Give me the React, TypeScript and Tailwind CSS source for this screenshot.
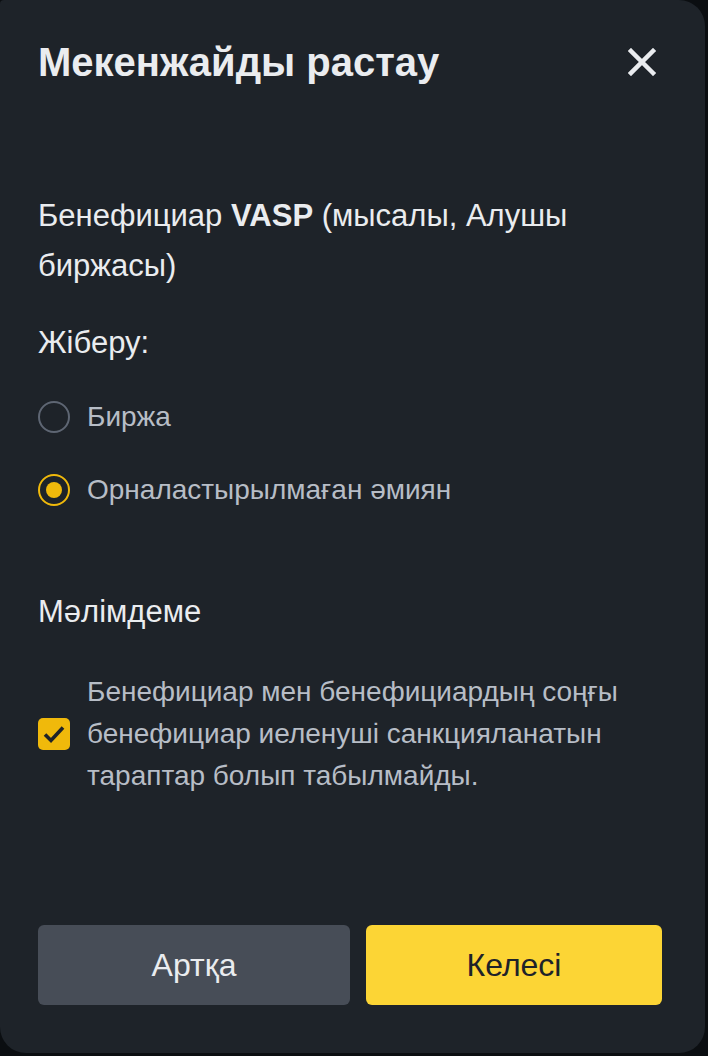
import { useState } from "react"

const FONT = { fontFamily: '"Liberation Sans", Arial, sans-serif' }

function Radio({ checked, label, onClick }: { checked: boolean; label: string; onClick: () => void }) {
  return (
    <button onClick={onClick} className="flex items-center gap-[17px] h-[42px] text-left">
      <span
        className={`w-8 h-8 rounded-full border-2 flex items-center justify-center ${
          checked ? "border-[#f0b90b]" : "border-[#5e6673]"
        }`}
      >
        {checked && <span className="w-4 h-4 rounded-full bg-[#f0b90b]" />}
      </span>
      <span className="text-[28px] leading-[42px] text-[#b7bdc6]">{label}</span>
    </button>
  )
}

export default function App() {
  const [target, setTarget] = useState<"exchange" | "wallet">("wallet")
  const [agree, setAgree] = useState(true)

  return (
    <div className="w-[708px] h-[1056px] bg-[#0b0e11]" style={FONT}>
      <div className="w-[705px] h-[1053px] bg-[#1e2329] rounded-tl-[4px] rounded-tr-[26px] rounded-b-[26px] flex flex-col px-[38px] pt-[38px] pb-[48px]">
        <div className="flex items-center justify-between h-12">
          <h1 className="text-[40px] leading-[48px] font-bold text-[#eaecef]">Мекенжайды растау</h1>
          <button className="w-8 h-8 flex items-center justify-center mr-[9px]">
            <svg width="28" height="28" viewBox="0 0 28 28">
              <path d="M3 3 L25 25 M25 3 L3 25" stroke="#eaecef" strokeWidth="4.5" strokeLinecap="square" />
            </svg>
          </button>
        </div>

        <p className="mt-[105px] text-[31px] leading-[50px] text-[#eaecef] pr-[60px]">
          Бенефициар <b className="font-bold">VASP</b> (мысалы, Алушы биржасы)
        </p>

        <p className="mt-[28px] text-[31px] leading-[48px] text-[#eaecef]">Жіберу:</p>

        <div className="mt-[29px] flex flex-col gap-[31px]">
          <Radio checked={target === "exchange"} label="Биржа" onClick={() => setTarget("exchange")} />
          <Radio checked={target === "wallet"} label="Орналастырылмаған әмиян" onClick={() => setTarget("wallet")} />
        </div>

        <p className="mt-[77px] text-[31px] leading-[48px] text-[#eaecef]">Мәлімдеме</p>

        <div className="mt-[35px] flex items-center gap-[17px]">
          <button
            onClick={() => setAgree(!agree)}
            className={`w-8 h-8 shrink-0 rounded-[5px] flex items-center justify-center ${
              agree ? "bg-[#f0b90b]" : "border-2 border-[#5e6673]"
            }`}
          >
            {agree && (
              <svg width="26" height="26" viewBox="0 0 26 26">
                <path d="M4 13.5 L10 19.5 L22 6.5" stroke="#1e2329" strokeWidth="3.6" fill="none" />
              </svg>
            )}
          </button>
          <p className="text-[28px] leading-[42px] text-[#b7bdc6]">
            Бенефициар мен бенефициардың соңғы бенефициар иеленуші санкцияланатын тараптар болып табылмайды.
          </p>
        </div>

        <div className="mt-auto flex gap-4">
          <button className="w-[312px] h-[80px] rounded-[6px] bg-[#474d57] text-[32px] text-[#eaecef]">Артқа</button>
          <button className="w-[296px] h-[80px] rounded-[6px] bg-[#fcd535] text-[32px] text-[#1e2329]">Келесі</button>
        </div>
      </div>
    </div>
  )
}
